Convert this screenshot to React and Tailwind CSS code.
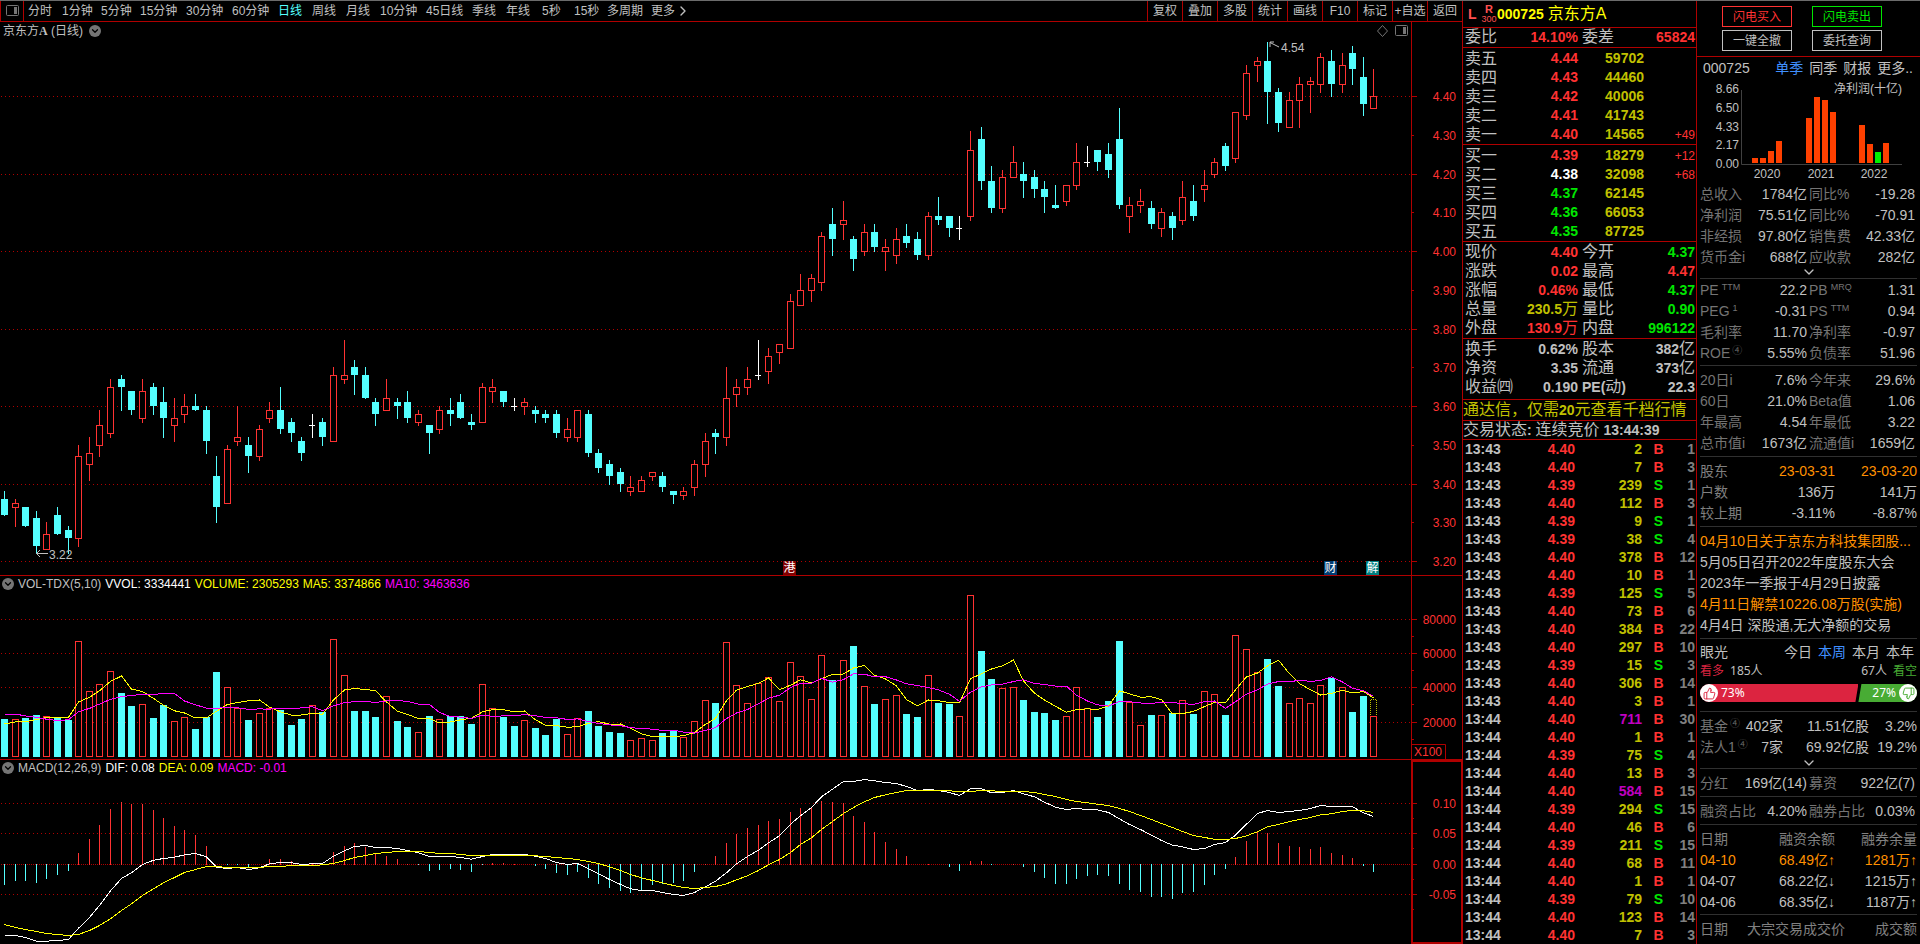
import React from 'react';
import { ChevronDown, ChevronRight, ThumbsDown, ThumbsUp } from 'lucide-react';

const RED = '#ff3232';
const CYAN = '#54ffff';
const LINE = '#b00000';

const PERIODS = [
  ['分时', 'w-[34px]'],
  ['1分钟', 'w-[39px]'],
  ['5分钟', 'w-[39px]'],
  ['15分钟', 'w-[46px]'],
  ['30分钟', 'w-[46px]'],
  ['60分钟', 'w-[46px]'],
  ['日线', 'w-[34px]'],
  ['周线', 'w-[34px]'],
  ['月线', 'w-[34px]'],
  ['10分钟', 'w-[46px]'],
  ['45日线', 'w-[46px]'],
  ['季线', 'w-[34px]'],
  ['年线', 'w-[36px]'],
  ['5秒', 'w-[32px]'],
  ['15秒', 'w-[33px]'],
  ['多周期', 'w-[44px]'],
];

const TOOLS = ['复权', '叠加', '多股', '统计', '画线', 'F10', '标记', '+自选', '返回'];

// high, open, close, low (in cents)
const CANDLES = [
  [338, 336, 332, 332], [336, 334, 335, 329], [334, 334, 329, 329], [333, 331, 324, 322], [330, 323, 327, 323],
  [334, 332, 327, 327], [329, 328, 326, 322], [350, 326, 347, 324], [352, 345, 348, 341], [359, 350, 355, 347],
  [367, 353, 365, 352], [368, 367, 365, 359], [364, 364, 359, 358], [367, 357, 364, 356], [366, 365, 360, 358],
  [365, 361, 357, 352], [362, 355, 357, 351], [363, 358, 360, 356], [363, 360, 359, 359], [360, 359, 351, 348],
  [347, 342, 334, 330], [350, 335, 349, 335], [360, 351, 352, 350], [352, 350, 347, 343], [355, 347, 354, 346],
  [361, 357, 359, 356], [365, 359, 354, 353], [357, 356, 353, 351], [352, 351, 348, 346], [358, 355, 355, 352],
  [357, 356, 352, 350], [370, 351, 368, 351], [377, 367, 368, 366], [372, 370, 368, 363], [370, 368, 362, 362],
  [362, 361, 358, 355], [367, 359, 362, 359], [362, 361, 360, 357], [364, 361, 357, 356], [359, 356, 358, 355],
  [355, 355, 353, 348], [360, 354, 359, 353], [362, 359, 358, 355], [363, 361, 357, 357], [358, 356, 355, 354],
  [366, 356, 365, 356], [367, 364, 365, 361], [364, 364, 361, 360], [362, 360, 360, 359], [362, 360, 361, 358],
  [360, 359, 358, 356], [359, 358, 357, 356], [359, 358, 353, 352], [357, 352, 354, 351], [359, 352, 359, 351],
  [359, 358, 348, 347], [349, 348, 344, 343], [346, 345, 342, 340], [344, 343, 340, 338], [342, 338, 339, 337],
  [342, 338, 341, 338], [343, 342, 343, 341], [343, 342, 339, 338], [338, 338, 337, 335], [339, 337, 338, 336],
  [346, 339, 345, 337], [353, 345, 351, 342], [354, 353, 352, 348], [370, 352, 362, 350], [367, 363, 365, 360],
  [370, 365, 367, 363], [377, 368, 368, 367], [375, 369, 373, 366], [376, 374, 376, 371], [389, 375, 387, 375],
  [394, 386, 390, 386], [394, 390, 393, 387], [405, 392, 404, 390], [411, 407, 403, 399], [413, 407, 408, 403],
  [404, 403, 398, 395], [407, 400, 405, 399], [407, 405, 401, 400], [403, 400, 401, 395], [406, 399, 403, 397],
  [407, 404, 402, 401], [405, 403, 399, 398], [410, 399, 409, 398], [414, 409, 408, 407], [409, 409, 406, 404],
  [409, 406, 406, 403], [431, 409, 426, 408], [432, 429, 418, 416], [422, 418, 411, 410], [421, 411, 419, 410],
  [427, 419, 423, 419], [423, 420, 418, 414], [421, 419, 416, 414], [418, 416, 414, 410], [417, 412, 411, 411],
  [417, 413, 417, 412], [428, 417, 423, 416], [427, 423, 423, 422], [426, 426, 423, 421], [428, 425, 421, 419],
  [437, 429, 412, 411], [414, 409, 412, 405], [416, 412, 413, 410], [413, 411, 407, 406], [411, 406, 410, 404],
  [410, 409, 406, 403], [418, 408, 414, 407], [417, 413, 409, 408], [421, 416, 417, 413], [424, 420, 423, 419],
  [428, 427, 422, 421], [436, 424, 436, 423], [448, 435, 446, 434], [450, 448, 449, 444], [454, 449, 441, 433],
  [442, 441, 433, 431], [441, 432, 439, 432], [445, 439, 443, 432], [445, 443, 444, 436], [451, 443, 450, 441],
  [452, 449, 443, 440], [451, 443, 448, 441], [453, 451, 447, 443], [450, 445, 438, 435], [447, 437, 440, 437],
];

// volume bar heights; the seeds are the days before the first visible candle
const VOLUME_SEEDS = [38, 59, 55, 60, 53, 28, 37, 32, 30];
const VOLUMES = [
  38, 38, 39, 42, 41, 39, 37, 116, 66, 73, 86, 64, 51, 53, 39, 52, 36, 40, 28, 40, 85, 70, 49, 37, 44, 49, 47, 32, 38,
  52, 45, 118, 82, 46, 46, 40, 61, 36, 30, 25, 41, 38, 41, 41, 33, 73, 49, 40, 31, 37, 29, 22, 38, 23, 39, 46, 31, 25,
  24, 17, 19, 17, 24, 26, 20, 36, 57, 54, 115, 72, 54, 74, 80, 56, 95, 81, 58, 102, 77, 97, 111, 71, 53, 58, 62, 43,
  40, 82, 54, 53, 41, 162, 106, 78, 69, 70, 57, 45, 44, 37, 41, 70, 49, 40, 56, 116, 55, 32, 42, 42, 44, 57, 43, 66,
  63, 42, 122, 108, 85, 98, 71, 54, 59, 54, 72, 79, 70, 45, 61, 41,
];

const MACD_BARS = [
  -21, -17, -17, -19, -15, -11, -7, 12, 26, 40, 56, 63, 61, 61, 55, 47, 39, 35, 30, 19, 0, -1, -1, -3, 0, 6, 6, 4, 0,
  2, 1, 13, 19, 22, 18, 11, 9, 6, 1, -1, -7, -6, -5, -6, -8, -1, 2, 2, 1, 0, -2, -5, -9, -11, -8, -14, -20, -24, -27,
  -29, -26, -21, -20, -19, -17, -8, 1, 9, 22, 31, 37, 40, 44, 46, 53, 57, 58, 64, 63, 62, 49, 43, 33, 23, 16, 9, 0, 1,
  0, -3, -7, 4, 4, -1, 0, 1, -3, -8, -14, -20, -20, -15, -12, -11, -12, -20, -26, -28, -33, -33, -35, -29, -28, -21,
  -11, -5, 8, 24, 34, 32, 22, 19, 18, 16, 18, 12, 10, 7, -2, -8,
];

// three units per pixel, zero axis at 883
const DIF = [
  1096, 1096, 1102, 1113, 1113, 1111, 1108, 1074, 1042, 1006, 962, 925, 908, 883, 870, 865, 861, 854, 850, 860, 891,
  895, 892, 898, 893, 881, 877, 878, 883, 881, 880, 858, 842, 829, 826, 832, 832, 835, 841, 848, 859, 859, 859, 862,
  867, 859, 853, 853, 853, 853, 858, 865, 877, 883, 880, 896, 911, 928, 943, 956, 961, 961, 967, 973, 976, 967, 950,
  933, 908, 881, 859, 840, 818, 797, 762, 737, 712, 680, 657, 634, 634, 628, 632, 637, 640, 649, 661, 658, 661, 667,
  676, 656, 656, 668, 667, 661, 671, 680, 696, 711, 718, 715, 718, 719, 727, 746, 763, 778, 795, 811, 825, 830, 838,
  835, 823, 817, 795, 762, 730, 721, 727, 724, 721, 715, 706, 709, 709, 710, 728, 739,
];
const DEA = [
  1063, 1072, 1078, 1084, 1090, 1093, 1096, 1093, 1081, 1066, 1046, 1021, 1001, 976, 956, 938, 922, 907, 898, 889, 889,
  892, 892, 892, 892, 889, 889, 886, 886, 886, 884, 880, 871, 862, 856, 850, 847, 844, 844, 844, 847, 850, 850, 853,
  856, 856, 856, 856, 856, 856, 857, 859, 862, 865, 868, 874, 880, 890, 901, 913, 923, 931, 938, 946, 952, 955, 952,
  949, 941, 929, 917, 901, 884, 868, 847, 823, 803, 778, 754, 730, 712, 695, 682, 674, 667, 661, 661, 661, 661, 662,
  664, 664, 661, 662, 664, 664, 664, 667, 673, 679, 688, 694, 698, 702, 706, 715, 724, 736, 748, 760, 772, 784, 796,
  802, 807, 808, 805, 797, 785, 770, 763, 754, 748, 742, 734, 731, 724, 721, 722, 727,
];

const SELLS = [
  ['卖五', '4.44', '59702', ''],
  ['卖四', '4.43', '44460', ''],
  ['卖三', '4.42', '40006', ''],
  ['卖二', '4.41', '41743', ''],
  ['卖一', '4.40', '14565', '+49'],
];
const BUYS = [
  ['买一', '4.39', '18279', '+12'],
  ['买二', '4.38', '32098', '+68'],
  ['买三', '4.37', '62145', ''],
  ['买四', '4.36', '66053', ''],
  ['买五', '4.35', '87725', ''],
];

const R = 'text-[#ff3232]';
const G = 'text-[#00e600]';
const Y = 'text-[#c0c000]';
const W = 'text-[#c0c0c0]';

const QUOTE = [
  ['现价', '4.40', R, '今开', '4.37', G],
  ['涨跌', '0.02', R, '最高', '4.47', R],
  ['涨幅', '0.46%', R, '最低', '4.37', G],
  ['总量', '230.5万', Y, '量比', '0.90', G],
  ['外盘', '130.9万', R, '内盘', '996122', G],
];
const SHARES = [
  ['换手', '0.62%', W, '股本', '382亿', W],
  ['净资', '3.35', W, '流通', '373亿', W],
  ['收益㈣', '0.190', W, 'PE(动)', '22.3', W],
];

const TICKS = [
  ['13:43', '4.40', 2, 'B', 1],
  ['13:43', '4.40', 7, 'B', 3],
  ['13:43', '4.39', 239, 'S', 1],
  ['13:43', '4.40', 112, 'B', 3],
  ['13:43', '4.39', 9, 'S', 1],
  ['13:43', '4.39', 38, 'S', 4],
  ['13:43', '4.40', 378, 'B', 12],
  ['13:43', '4.40', 10, 'B', 1],
  ['13:43', '4.39', 125, 'S', 5],
  ['13:43', '4.40', 73, 'B', 6],
  ['13:43', '4.40', 384, 'B', 22],
  ['13:43', '4.40', 297, 'B', 10],
  ['13:43', '4.39', 15, 'S', 3],
  ['13:43', '4.40', 306, 'B', 14],
  ['13:43', '4.40', 3, 'B', 1],
  ['13:44', '4.40', 711, 'B', 30],
  ['13:44', '4.40', 1, 'B', 1],
  ['13:44', '4.39', 75, 'S', 4],
  ['13:44', '4.40', 13, 'B', 3],
  ['13:44', '4.40', 584, 'B', 15],
  ['13:44', '4.39', 294, 'S', 15],
  ['13:44', '4.40', 46, 'B', 6],
  ['13:44', '4.39', 211, 'S', 15],
  ['13:44', '4.40', 68, 'B', 11],
  ['13:44', '4.40', 1, 'B', 1],
  ['13:44', '4.39', 79, 'S', 10],
  ['13:44', '4.40', 123, 'B', 14],
  ['13:44', '4.40', 7, 'B', 3],
];

const PROFIT = [
  { year: '2020', x: 55, bars: [5, 5, 12, 22] },
  { year: '2021', x: 109, bars: [45, 66, 63, 51] },
  { year: '2022', x: 162, bars: [38, 19, 11, 20] },
];

const NEWS = [
  ['04月10日关于京东方科技集团股...', true],
  ['5月05日召开2022年度股东大会', false],
  ['2023年一季报于4月29日披露', false],
  ['4月11日解禁10226.08万股(实施)', true],
  ['4月4日 深股通,无大净额的交易', false],
];

const candleX = (i) => Math.floor(4.4 + i * 10.617);
const priceY = (cents) => Math.round(74 + (440 - cents) * 3.875);
const points = (values, toY) => values.map((v, i) => `${candleX(i) + 0.5},${toY(v).toFixed(1)}`).join(' ');

const average = (n) => {
  const all = [...VOLUME_SEEDS, ...VOLUMES];
  return VOLUMES.map((_, i) => {
    const end = i + VOLUME_SEEDS.length + 1;
    return all.slice(end - n, end).reduce((a, b) => a + b, 0) / n;
  });
};

const isUp = (i) => {
  const [, open, close] = CANDLES[i];
  if (open === close) return i !== 48;
  return close > open;
};

const GridLine = ({ y, dense }) => (
  <line x1="1" x2="100%" y1={y + 0.5} y2={y + 0.5} stroke={LINE} strokeDasharray={dense ? '1 1' : '1 3'} />
);

const PaneIcon = ({ className }) => (
  <svg width="13" height="12" viewBox="0 0 13 12" className={className} aria-hidden="true">
    <rect x="0.5" y="0.5" width="12" height="10" rx="1" fill="none" stroke="currentColor" />
    <rect x="8" y="2" width="3" height="7" fill="currentColor" />
  </svg>
);

const RoundMenu = ({ label }) => (
  <button aria-label={label} className="flex h-3 w-3 items-center justify-center rounded-full bg-[#757575] text-black">
    <ChevronDown size={10} strokeWidth={3} />
  </button>
);

const Flag = ({ x, fill, children }) => (
  <g>
    <rect x={x} y="539" width="13" height="14" fill={fill} />
    <text x={x + 6.5} y="550" fontSize="12" textAnchor="middle" fill="#fff">
      {children}
    </text>
  </g>
);

const Candles = () => (
  <g shapeRendering="crispEdges">
    {CANDLES.map(([high, open, close, low], i) => {
      const x = candleX(i);
      const top = priceY(Math.max(open, close));
      const bottom = priceY(Math.min(open, close));
      const color = open === close ? '#fff' : close > open ? RED : CYAN;
      return (
        <g key={i}>
          <rect x={x} y={priceY(high)} width="1" height={priceY(low) - priceY(high) + 1} fill={color} />
          {open === close && <rect x={x - 3} y={top} width="6" height="1" fill={color} />}
          {close < open && <rect x={x - 3} y={top} width="7" height={bottom - top} fill={color} />}
          {close > open && (
            <rect x={x - 2.5} y={top + 0.5} width="6" height={bottom - top} fill="#000" stroke={color} />
          )}
        </g>
      );
    })}
  </g>
);

const PriceChart = () => (
  <section className="flex h-[554px] border-b border-[#b00000]">
    <div className="relative min-w-0 flex-1">
      <svg className="block h-full w-full" role="img" aria-label="日线">
        {[440, 420, 400, 380, 360, 340, 320].map((p) => (
          <GridLine key={p} y={priceY(p)} />
        ))}
        <Candles />
        <path d="M1279 25 L1270 20.5 M1270 25 V20 H1274" fill="none" stroke="#c0c0c0" />
        <text x="1281" y="30" fontSize="12" fill="#c0c0c0">4.54</text>
        <path d="M48 531.5 H37 M40 528 L36.5 531.5 L40 535" fill="none" stroke="#c0c0c0" />
        <text x="49" y="537" fontSize="12" fill="#c0c0c0">3.22</text>
        <Flag x={783} fill="#800000">港</Flag>
        <Flag x={1324} fill="#003c70">财</Flag>
        <Flag x={1366} fill="#008080">解</Flag>
      </svg>
      <div className="absolute left-[3px] top-0 flex h-[17px] items-center gap-[6px] text-xs text-[#c0c0c0]">
        <h1>
          京东方<span className="font-['Liberation_Serif',serif] font-bold">A</span> (日线)
        </h1>
        <RoundMenu label="日线菜单" />
      </div>
      <div className="absolute right-[3px] top-[3px] flex items-center gap-[7px] text-[#757575]">
        <svg width="11" height="12" viewBox="0 0 11 12" aria-hidden="true">
          <path d="M5.5 0.5 L10.5 6 L5.5 11.5 L0.5 6 Z" fill="none" stroke="currentColor" />
        </svg>
        <PaneIcon />
      </div>
    </div>
    <svg className="block h-full w-[51px] border-l border-[#b00000]" aria-hidden="true">
      {[440, 430, 420, 410, 400, 390, 380, 370, 360, 350, 340, 330, 320].map((p) => (
        <g key={p}>
          <rect y={priceY(p)} width={p % 20 ? 2 : 5} height="1" fill={LINE} />
          <text x="44" y={priceY(p) + 5} fontSize="12" textAnchor="end" fill={RED}>
            {(p / 100).toFixed(2)}
          </text>
        </g>
      ))}
    </svg>
  </section>
);

const IndicatorTitle = ({ label, name, items }) => (
  <div className="absolute left-[2px] top-0 flex h-4 items-center gap-1 text-xs whitespace-nowrap">
    <RoundMenu label={label} />
    <span className="text-[#c0c0c0]">{name}</span>
    {items.map(([text, color]) => (
      <span key={text} className={color}>{text}</span>
    ))}
  </div>
);

const VolumeChart = () => (
  <section className="flex h-[184px] border-b border-[#b00000]">
    <div className="relative min-w-0 flex-1">
      <svg className="block h-full w-full" role="img" aria-label="成交量">
        {[43, 77, 111, 146].map((y) => (
          <GridLine key={y} y={y} />
        ))}
        <g shapeRendering="crispEdges">
          {VOLUMES.map((h, i) =>
            isUp(i) ? (
              <rect key={i} x={candleX(i) - 2.5} y={181.5 - h} width="6" height={h - 1} fill="#000" stroke={RED} />
            ) : (
              <rect key={i} x={candleX(i) - 3} y={181 - h} width="7" height={h} fill={CYAN} />
            ),
          )}
          <path d="M1370.5 139 V123.5 H1376.5 V139" fill="none" stroke="#c0c000" strokeDasharray="1 1" />
          <polyline points={points(average(5), (v) => 181 - v)} fill="none" stroke="#ffff00" />
          <polyline points={points(average(10), (v) => 181 - v)} fill="none" stroke="#ff00ff" />
        </g>
      </svg>
      <IndicatorTitle
        label="成交量指标"
        name="VOL-TDX(5,10)"
        items={[
          ['VVOL: 3334441', 'text-white'],
          ['VOLUME: 2305293', 'text-[#ffff00]'],
          ['MA5: 3374866', 'text-[#ffff00]'],
          ['MA10: 3463636', 'text-[#ff00ff]'],
        ]}
      />
    </div>
    <svg className="block h-full w-[51px] border-l border-[#b00000]" aria-hidden="true">
      {[[43, '80000'], [77, '60000'], [111, '40000'], [146, '20000']].map(([y, text]) => (
        <g key={y}>
          <rect y={y} width="5" height="1" fill={LINE} />
          <rect y={y + 17} width="2" height="1" fill={LINE} />
          <text x="44" y={y + 5} fontSize="12" textAnchor="end" fill={RED}>{text}</text>
        </g>
      ))}
      <path d="M0 168.5 H33.5 V183" fill="none" stroke={LINE} />
      <text x="2" y="180" fontSize="12" fill={RED}>X100</text>
    </svg>
  </section>
);

const MacdChart = () => (
  <section className="flex h-[184px]">
    <div className="relative min-w-0 flex-1">
      <svg className="block h-full w-full" role="img" aria-label="MACD">
        {[43, 73, 134].map((y) => (
          <GridLine key={y} y={y} />
        ))}
        <GridLine y={104} dense />
        <g shapeRendering="crispEdges">
          {MACD_BARS.map((v, i) => (
            <rect
              key={i}
              x={candleX(i)}
              y={v > 0 ? 105 - v : 104}
              width="1"
              height={Math.abs(v)}
              fill={v > 0 ? RED : CYAN}
            />
          ))}
          <polyline points={points(DIF, (v) => 104.5 + (v - 883) / 3)} fill="none" stroke="#fff" />
          <polyline points={points(DEA, (v) => 104.5 + (v - 883) / 3)} fill="none" stroke="#ffff00" />
        </g>
      </svg>
      <IndicatorTitle
        label="MACD指标"
        name="MACD(12,26,9)"
        items={[
          ['DIF: 0.08', 'text-white'],
          ['DEA: 0.09', 'text-[#ffff00]'],
          ['MACD: -0.01', 'text-[#ff00ff]'],
        ]}
      />
    </div>
    <svg className="block h-full w-[51px] border-2 border-r border-[#b00000]" aria-hidden="true">
      {[[41, '0.10'], [71, '0.05'], [102, '0.00'], [132, '-0.05']].map(([y, text]) => (
        <g key={y}>
          <rect y={y} width="4" height="1" fill={LINE} />
          <rect y={y + 15} width="1" height="1" fill={LINE} />
          <text x="43" y={y + 5} fontSize="12" textAnchor="end" fill={RED}>{text}</text>
        </g>
      ))}
    </svg>
  </section>
);

const Toolbar = () => (
  <nav className="flex h-[21px] items-stretch border-b border-[#b00000] text-xs text-[#c0c0c0]">
    <button aria-label="侧栏" className="flex w-6 items-center justify-center border-x border-[#b00000] text-[#757575]">
      <PaneIcon />
    </button>
    <div className="flex flex-1 items-center pl-1 whitespace-nowrap">
      {PERIODS.map(([name, width]) => (
        <button key={name} className={`text-left ${width} ${name === '日线' ? 'text-[#54ffff]' : ''}`}>
          {name}
        </button>
      ))}
      <button className="flex items-center">
        更多
        <ChevronRight size={16} strokeWidth={2} />
      </button>
    </div>
    {TOOLS.map((name) => (
      <button key={name} className="w-[35px] border-l border-[#b00000] text-center whitespace-nowrap">
        {name}
      </button>
    ))}
  </nav>
);

// digits are bold, Chinese characters stay regular and larger
const Mixed = ({ children }) =>
  children.split(/([\u3200-\u9fff，]+)/).map((part, i) =>
    i % 2 ? (
      <span key={i} className="text-base leading-none font-normal">{part}</span>
    ) : (
      part
    ),
  );

const bookColor = (price) => {
  if (price === '4.38') return 'text-white';
  return price > '4.38' ? R : G;
};

const OrderBook = ({ label, rows }) => (
  <div className="border-b border-[#b00000] pt-px">
    <table aria-label={label} className="w-full table-fixed text-sm">
      <tbody>
        {rows.map(([name, price, volume, change]) => (
          <tr key={name} className="h-[19px] leading-[19px]">
            <th className="w-[50px] pl-[2px] text-left text-base leading-[19px] font-normal">{name}</th>
            <td className={`w-[65px] text-right font-bold ${bookColor(price)}`}>{price}</td>
            <td className="w-[66px] text-right font-bold text-[#c0c000]">{volume}</td>
            <td className="pr-px text-right text-xs text-[#ff3232]">{change}</td>
          </tr>
        ))}
      </tbody>
    </table>
  </div>
);

const StatTable = ({ label, rows, className }) => (
  <div className={`border-b border-[#b00000] ${className}`}>
    <table aria-label={label} className="w-full table-fixed text-sm font-bold whitespace-nowrap">
      <tbody>
        {rows.map(([name, value, color, name2, value2, color2]) => (
          <tr key={name} className="h-[19px] leading-[19px]">
            <th className="w-[50px] pl-[2px] text-left leading-[19px]"><Mixed>{name}</Mixed></th>
            <td className={`w-[65px] text-right ${color}`}><Mixed>{value}</Mixed></td>
            <th className="w-[50px] pl-1 text-left leading-[19px]"><Mixed>{name2}</Mixed></th>
            <td className={`pr-px text-right ${color2}`}><Mixed>{value2}</Mixed></td>
          </tr>
        ))}
      </tbody>
    </table>
  </div>
);

const QuotePanel = () => (
  <aside className="w-[235px] shrink-0 overflow-hidden border-x border-[#b00000] text-[#c0c0c0]">
    <header className="flex h-[27px] items-center border-b border-[#b00000] pl-[5px]">
      <span className="w-[13px] text-sm leading-none font-bold text-[#ff5050]">L</span>
      <span className="flex w-4 flex-col items-center text-[9px] leading-[10px] text-[#ff5050]">
        <b className="text-[11px]">R</b>
        300
      </span>
      <span className="text-sm font-bold text-[#ffff00]">000725</span>
      <h2 className="ml-1 text-base leading-none text-[#ffff00]">京东方A</h2>
    </header>
    <StatTable label="委比" className="h-5" rows={[['委比', '14.10%', R, '委差', '65824', R]]} />
    <OrderBook label="卖盘" rows={SELLS} />
    <OrderBook label="买盘" rows={BUYS} />
    <StatTable label="行情" className="pt-px" rows={QUOTE} />
    <StatTable label="股本" className="pt-px pb-[2px]" rows={SHARES} />
    <p className="h-[21px] border-b border-[#b00000] text-sm leading-5 font-bold whitespace-nowrap text-[#c0c000]">
      <Mixed>通达信，仅需20元查看千档行情</Mixed>
    </p>
    <p className="h-[19px] border-b border-[#b00000] text-sm leading-[18px] font-bold whitespace-nowrap">
      <Mixed>交易状态: 连续竞价 13:44:39</Mixed>
    </p>
    <table aria-label="成交明细" className="w-full table-fixed text-sm font-bold">
      <tbody>
        {TICKS.map(([time, price, volume, side, count], i) => (
          <tr key={i} className="h-[18px] leading-[18px]">
            <td className="w-[50px] pl-[2px]">{time}</td>
            <td className="w-[62px] text-right text-[#ff3232]">{price}</td>
            <td className={`w-[67px] text-right ${volume > 500 ? 'text-[#c000c0]' : 'text-[#c0c000]'}`}>{volume}</td>
            <td className={`w-[33px] text-center ${side === 'B' ? R : G}`}>{side}</td>
            <td className="pr-px text-right text-[#808080]">{count}</td>
          </tr>
        ))}
      </tbody>
    </table>
  </aside>
);

const ProfitChart = () => (
  <svg className="block h-[105px] w-full pt-px" role="img" aria-label="净利润(十亿)" fontSize="12" fill="#c0c0c0">
    {['8.66', '6.50', '4.33', '2.17', '0.00'].map((text, i) => (
      <text key={text} x="42" y={14 + Math.round(i * 18.75)} textAnchor="end">{text}</text>
    ))}
    <text x="205" y="14" textAnchor="end">净利润(十亿)</text>
    <path d="M44.5 11 V85.5 H205" fill="none" stroke="#404040" />
    {PROFIT.map(({ year, x, bars }) => (
      <g key={year}>
        {bars.map((h, i) => (
          <rect key={i} x={x + i * 8} y={84 - h} width="6" height={h} fill={h === 11 ? '#00f000' : '#ff4000'} />
        ))}
        <text x={x + 15} y="99" textAnchor="middle">{year}</text>
      </g>
    ))}
  </svg>
);

const Sup = ({ children }) => (
  <sup className="relative -top-[5px] ml-[3px] align-baseline text-[9px] leading-none">{children}</sup>
);

const Quarter = () => (
  <sup className="relative -top-1 ml-[2px] align-baseline font-['Noto_Sans_CJK_SC',sans-serif] text-[10px] leading-none text-[#686868]">
    ④
  </sup>
);

const Group = ({ children, className = 'pt-1 pb-[2px]' }) => (
  <div className={`mx-[3px] border-t border-[#303030] ${className}`}>{children}</div>
);

const Pair = ({ items }) => {
  const [name, value, name2, value2] = items;
  return (
    <div className="flex h-[21px] items-center">
      <div className="flex w-[107px] justify-between">
        <span className="text-[#747474]">{name}</span>
        <span>{value}</span>
      </div>
      <div className="flex flex-1 justify-between pr-[2px] pl-[2px]">
        <span className="text-[#747474]">{name2}</span>
        <span>{value2}</span>
      </div>
    </div>
  );
};

const ThreeCols = ({ cells, className = '' }) => (
  <tr className={`h-[21px] leading-[21px] ${className}`}>
    <td className="w-[40px]">{cells[0]}</td>
    <td className="w-[95px] text-right">{cells[1]}</td>
    <td className="text-right">{cells[2]}</td>
  </tr>
);

const More = () => (
  <button aria-label="展开" className="flex h-[10px] w-full items-center justify-center">
    <ChevronDown size={16} className="shrink-0" />
  </button>
);

const TabRow = ({ title, tabs, active }) => (
  <div className="flex h-[21px] items-center justify-between">
    <span>{title}</span>
    <div className="flex gap-[6px]">
      {tabs.map((tab) => (
        <button key={tab} className={tab === active ? 'text-[#4090ff]' : ''}>{tab}</button>
      ))}
    </div>
  </div>
);

const SentimentBar = () => (
  <div className="mb-[9px] flex h-[18px] font-['Noto_Sans','Noto_Sans_CJK_SC',sans-serif] text-xs text-white">
    <div className="flex flex-[73] items-center rounded-l-full bg-[#dc2440] [clip-path:polygon(0_0,100%_0,calc(100%-3px)_100%,0_100%)]">
      <span className="flex h-[18px] w-[18px] items-center justify-center rounded-full bg-white text-[#dc2440]">
        <ThumbsUp size={13} strokeWidth={1.75} />
      </span>
      <span className="ml-[3px]">73%</span>
    </div>
    <div className="flex flex-[27] items-center justify-end rounded-r-full bg-[#48ac34] [clip-path:polygon(3px_0,100%_0,100%_100%,0_100%)]">
      <span className="mr-[3px]">27%</span>
      <span className="flex h-[18px] w-[18px] items-center justify-center rounded-full bg-white text-[#48ac34]">
        <ThumbsDown size={13} strokeWidth={1.75} />
      </span>
    </div>
  </div>
);

const tradeButton = 'h-[21px] w-[70px] border text-xs';

const FundRow = ({ name, count, shares, ratio }) => (
  <tr className="h-[21px] leading-[21px]">
    <td className="w-[45px] text-[#747474]">{name}<Quarter /></td>
    <td className="w-[38px] text-right">{count}</td>
    <td className="w-[86px] text-right">{shares}</td>
    <td className="text-right">{ratio}</td>
  </tr>
);

const InfoPanel = () => (
  <aside className="w-[223px] shrink-0 overflow-hidden text-sm whitespace-nowrap text-[#c0c0c0]">
    <div className="grid h-[56px] grid-cols-[70px_70px] content-start justify-center gap-x-5 gap-y-[3px] border-b border-[#b00000] pt-[5px] pr-[13px]">
      <button className={`${tradeButton} border-[#ff3232] text-[#ff3232]`}>闪电买入</button>
      <button className={`${tradeButton} border-[#00e600] text-[#00e600]`}>闪电卖出</button>
      <button className={`${tradeButton} border-[#c0c0c0]`}>一键全撤</button>
      <button className={`${tradeButton} border-[#c0c0c0]`}>委托查询</button>
    </div>
    <div className="pr-[7px] pl-[6px]">
      <TabRow title="000725" tabs={['单季', '同季', '财报', '更多..']} active="单季" />
    </div>
    <ProfitChart />
    <div className="mx-[3px] pb-px">
      <Pair items={['总收入', '1784亿', '同比%', '-19.28']} />
      <Pair items={['净利润', '75.51亿', '同比%', '-70.91']} />
      <Pair items={['非经损', '97.80亿', '销售费', '42.33亿']} />
      <Pair items={['货币金i', '688亿', '应收款', '282亿']} />
      <More />
    </div>
    <Group className="pb-[2px]">
      <Pair items={[<>PE<Sup>TTM</Sup></>, '22.2', <>PB<Sup>MRQ</Sup></>, '1.31']} />
      <Pair items={[<>PEG<Sup>1</Sup></>, '-0.31', <>PS<Sup>TTM</Sup></>, '0.94']} />
      <Pair items={['毛利率', '11.70', '净利率', '-0.97']} />
      <Pair items={[<>ROE<Quarter /></>, '5.55%', '负债率', '51.96']} />
    </Group>
    <Group className="py-[3px]">
      <Pair items={['20日i', '7.6%', '今年来', '29.6%']} />
      <Pair items={['60日', '21.0%', 'Beta值', '1.06']} />
      <Pair items={['年最高', '4.54', '年最低', '3.22']} />
      <Pair items={['总市值i', '1673亿', '流通值i', '1659亿']} />
    </Group>
    <Group>
      <table className="w-full table-fixed">
        <tbody>
          <ThreeCols
            className="text-[#ff9000]"
            cells={[<span className="text-[#808080]">股东</span>, '23-03-31', '23-03-20']}
          />
          <ThreeCols cells={[<span className="text-[#808080]">户数</span>, '136万', '141万']} />
          <ThreeCols cells={[<span className="text-[#808080]">较上期</span>, '-3.11%', '-8.87%']} />
        </tbody>
      </table>
    </Group>
    <Group>
      {NEWS.map(([text, hot]) => (
        <a key={text} href="#news" className={`block h-[21px] leading-[21px] ${hot ? 'text-[#ff9000]' : ''}`}>
          {text}
        </a>
      ))}
    </Group>
    <Group className="pt-[2px]">
      <div className="pr-[3px]">
        <TabRow title="眼光" tabs={['今日', '本周', '本月', '本年']} active="本周" />
      </div>
      <div className="flex h-[22px] items-center gap-[6px] pb-1 text-xs font-['Noto_Sans','Noto_Sans_CJK_SC',sans-serif]">
        <span className="text-[#dc2440]">看多</span>
        <span className="flex-1">185人</span>
        <span>67人</span>
        <span className="text-[#48ac34]">看空</span>
      </div>
      <SentimentBar />
    </Group>
    <Group className="pt-1">
      <table className="w-full table-fixed">
        <tbody>
          <FundRow name="基金" count="402家" shares="11.51亿股" ratio="3.2%" />
          <FundRow name="法人1" count="7家" shares="69.92亿股" ratio="19.2%" />
        </tbody>
      </table>
      <More />
    </Group>
    <Group className="py-[3px]">
      <Pair items={['分红', '169亿(14)', '募资', '922亿(7)']} />
    </Group>
    <Group className="py-[3px]">
      <Pair items={['融资占比', '4.20%', '融券占比', '0.03%']} />
    </Group>
    <Group className="pt-1 pb-px">
      <table className="w-full table-fixed">
        <tbody>
          <ThreeCols className="text-[#808080]" cells={['日期', '融资余额', '融券余量']} />
          <ThreeCols className="text-[#ff9000]" cells={['04-10', '68.49亿↑', '1281万↑']} />
          <ThreeCols cells={['04-07', '68.22亿↓', '1215万↑']} />
          <ThreeCols cells={['04-06', '68.35亿↓', '1187万↑']} />
        </tbody>
      </table>
    </Group>
    <Group className="py-[3px]">
      <div className="flex h-[21px] items-center text-[#808080]">
        <span className="w-[47px]">日期</span>
        <span className="flex-1">大宗交易成交价</span>
        <span>成交额</span>
      </div>
    </Group>
  </aside>
);

export default function App() {
  return (
    <div className="flex h-screen overflow-hidden border-t border-[#6b6b6b] bg-black font-['Liberation_Sans','Noto_Sans_CJK_SC',sans-serif]">
      <main className="min-w-0 flex-1">
        <Toolbar />
        <PriceChart />
        <VolumeChart />
        <MacdChart />
      </main>
      <QuotePanel />
      <InfoPanel />
    </div>
  );
}
